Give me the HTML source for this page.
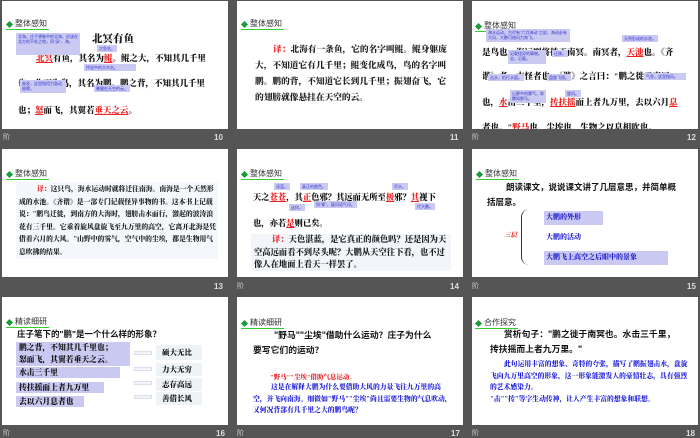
<!DOCTYPE html>
<html><head><meta charset="utf-8"><style>
*{margin:0;padding:0;box-sizing:border-box}
body{width:700px;height:438px;background:#555;position:relative;overflow:hidden;font-family:"Liberation Serif","Noto Serif CJK SC",serif}
.s{position:absolute;width:226px;height:128px;background:#fff;overflow:hidden}
.h{position:absolute;left:4px;top:18px;font:8px "Liberation Sans","Noto Sans CJK SC",sans-serif;color:#333;padding-left:9px;border-bottom:1px solid #3c3;line-height:10px;padding-right:2px}
.h:before{content:"";position:absolute;left:1px;top:3px;width:5px;height:5px;background:#1a9c3a;transform:rotate(45deg)}
.a{position:absolute;font-weight:900;color:#111;white-space:nowrap}
.n{position:absolute;background:#c9c9f2;color:#33c;font:4px "Liberation Sans","Noto Sans CJK SC",sans-serif;line-height:5px;padding:1px 2px}
.r{color:#e22;text-decoration:underline}
.f{position:absolute;color:#ddd;font:bold 8px "Liberation Sans",sans-serif}
.k{position:absolute;font:7px "Liberation Sans","Noto Sans CJK SC",sans-serif;color:#ccc}
.t{position:absolute;font-weight:900;color:#222}
.q{font-family:"Liberation Sans","Noto Sans CJK SC",sans-serif!important;font-weight:bold}
.bl{color:#22d}
</style></head><body>

<!-- slide 10 -->
<div class="s" style="left:2px;top:1px">
<div class="h">整体感知</div>
<div class="a" style="left:90px;top:30px;font-size:10.5px">北冥有鱼</div>
<div class="a" style="left:34px;top:51px;font-size:8.5px"><span class="r">北冥</span>有鱼，其名为<span class="r">鲲</span>。鲲之大，不知其几千里</div>
<div class="a" style="left:16px;top:76px;font-size:8.5px">也；化而为鸟，其名为鹏。鹏之背，不知其几千里</div>
<div class="a" style="left:16px;top:103px;font-size:8.5px">也；<span class="r">怒</span>而飞，其翼若<span class="r">垂天之云</span>。</div>
<div class="n" style="left:14px;top:32px;width:64px;height:22px">北海。庄子想象中的北海，应该在北方的不毛之地。同"溟"，海。</div>
<div class="n" style="left:95px;top:44px">大鱼名。</div>
<div class="n" style="left:82px;top:63px;width:52px">传说中的大鸟名。</div>
<div class="n" style="left:18px;top:79px;width:46px;height:13px">奋发，这里指用力鼓动翅膀。</div>
<div class="n" style="left:92px;top:84px">暴健在天空的云。</div>
</div>
<div class="k" style="left:3px;top:132px">阶</div><div class="f" style="left:214px;top:133px">10</div>

<!-- slide 11 -->
<div class="s" style="left:237px;top:1px">
<div class="h">整体感知</div>
<div class="t" style="left:18px;top:40px;width:196px;font-size:8.7px;line-height:16px;text-indent:18px"><span style="color:#e22">译：</span>北海有一条鱼，它的名字叫鲲。鲲身躯庞大，不知道它有几千里；鲲变化成鸟，鸟的名字叫鹏。鹏的背，不知道它长到几千里；振翅奋飞，它的翅膀就像悬挂在天空的云。</div>
</div>
<div class="f" style="left:450px;top:133px">11</div>

<!-- slide 12 -->
<div class="s" style="left:472px;top:1px">
<div class="h" style="left:3px;top:20px">整体感知</div>
<div class="a" style="left:10px;top:45px;font-size:8.5px">是鸟也，海运则将徙于南冥。南冥者，<span class="r">天池</span>也。《齐</div>
<div class="a" style="left:10px;top:69px;font-size:8.5px">谐》者，志怪者也。《谐》之言曰："鹏之徙于南冥</div>
<div class="a" style="left:10px;top:95px;font-size:8.5px">也，<span class="r">水</span>击三千里，<span class="r">抟扶摇</span>而上者九万里，去以六月<span class="r">息</span></div>
<div class="a" style="left:10px;top:120px;font-size:8.5px">者也。"<span class="r">野马</span>也，尘埃也，生物之以息相吹也。</div>
<div class="n" style="left:14px;top:28px;width:84px;height:13px">海水运动。古代有"六月海动"之说，海动必有大风，大鹏可借风力南飞。</div>
<div class="n" style="left:150px;top:34px">天然形成的水池。</div>
<div class="n" style="left:36px;top:49px;width:38px;height:14px">记载怪异的事物。志，记载。</div>
<div class="n" style="left:80px;top:49px">迁移。</div>
<div class="n" style="left:16px;top:73px">击水，拍打水面。</div>
<div class="n" style="left:75px;top:73px">盘旋飞翔。</div>
<div class="n" style="left:172px;top:72px;width:42px">气息，这里指风。</div>
<div class="n" style="left:38px;top:89px;width:36px;height:13px">山野中的雾气，奔腾如野马。</div>
<div class="n" style="left:93px;top:89px">旋风。</div>
</div>
<div class="k" style="left:472px;top:132px">阶</div><div class="f" style="left:687px;top:133px">12</div>

<!-- slide 13 -->
<div class="s" style="left:2px;top:149px">
<div class="h" style="top:20px">整体感知</div>
<div style="position:absolute;left:14px;top:33px;width:202px;height:77px;background:#f4f7fb"></div>
<div class="t" style="left:17px;top:35px;width:200px;font-size:6.8px;line-height:12.5px;text-indent:18px"><span style="color:#e22">译：</span>这只鸟，海水运动时就将迁往南海。南海是一个天然形成的水池。《齐谐》是一部专门记载怪异事物的书。这本书上记载说："鹏鸟迁徙，到南方的大海时，翅膀击水而行，激起的波涛浪花有三千里。它乘着旋风盘旋飞至九万里的高空，它离开北海是凭借着六月的大风。"山野中的雾气，空气中的尘埃，都是生物用气息吹拂的结果。</div>
</div>
<div class="f" style="left:214px;top:282px">13</div>

<!-- slide 14 -->
<div class="s" style="left:237px;top:149px">
<div class="h" style="top:20px">整体感知</div>
<div class="a" style="left:16px;top:42px;font-size:8.3px">天之<span class="r">苍苍</span>，其<span class="r">正</span>色邪？其远而无所至<span class="r">极</span>邪？<span class="r">其</span>视下</div>
<div class="a" style="left:16px;top:68px;font-size:8.3px">也，亦若<span class="r">是</span>则已矣。</div>
<div class="n" style="left:37px;top:34px">深蓝。</div>
<div class="n" style="left:63px;top:34px">真正的颜色。</div>
<div class="n" style="left:155px;top:34px">尽头。</div>
<div class="n" style="left:52px;top:55px">这样。</div>
<div class="n" style="left:77px;top:52px">同"耶"，疑问语气词。</div>
<div class="n" style="left:178px;top:54px">代大鹏。</div>
<div style="position:absolute;left:14px;top:85px;width:200px;height:37px;background:#f2f6fa"></div>
<div class="t" style="left:17px;top:85px;width:198px;font-size:8.3px;line-height:12.5px;text-indent:18px"><span style="color:#e22">译：</span>天色湛蓝，是它真正的颜色吗？还是因为天空高远而看不到尽头呢？大鹏从天空往下看，也不过像人在地面上看天一样罢了。</div>
</div>
<div class="k" style="left:237px;top:281px">阶</div><div class="f" style="left:450px;top:282px">14</div>

<!-- slide 15 -->
<div class="s" style="left:472px;top:149px">
<div class="h" style="top:20px">整体感知</div>
<div class="a q" style="left:34px;top:32px;font-size:8.5px">朗读课文，说说课文讲了几层意思，并简单概</div>
<div class="a q" style="left:15px;top:47px;font-size:8.5px">括层意。</div>
<div class="a" style="left:32px;top:81px;font-size:6.5px;color:#e22;font-style:italic">三层</div>
<div style="position:absolute;left:49px;top:60px;width:10px;height:56px;border-left:1px solid #333;border-radius:8px 0 0 8px"></div>
<div style="position:absolute;left:72px;top:62px;width:59px;height:14px;background:#c9c9f2"></div>
<div class="a" style="left:74px;top:63px;font-size:7px;color:#22c">大鹏的外形</div>
<div class="a" style="left:74px;top:83px;font-size:7px;color:#22c">大鹏的活动</div>
<div style="position:absolute;left:72px;top:102px;width:124px;height:14px;background:#c9c9f2"></div>
<div class="a" style="left:74px;top:103px;font-size:7px;color:#22c">大鹏飞上高空之后眼中的景象</div>
</div>
<div class="k" style="left:472px;top:281px">阶</div><div class="f" style="left:687px;top:282px">15</div>

<!-- slide 16 -->
<div class="s" style="left:2px;top:297px">
<div class="h" style="top:20px">精读细研</div>
<div class="a q" style="left:15px;top:31px;font-size:8.5px">庄子笔下的"鹏"是一个什么样的形象？</div>
<div style="position:absolute;left:14px;top:45px;width:114px;height:24px;background:#c9c9f2"></div>
<div style="position:absolute;left:14px;top:70px;width:104px;height:11px;background:#c9c9f2"></div>
<div style="position:absolute;left:14px;top:85px;width:88px;height:11px;background:#c9c9f2"></div>
<div style="position:absolute;left:14px;top:99px;width:68px;height:11px;background:#c9c9f2"></div>
<div class="a" style="left:17px;top:45px;font-size:7.8px;line-height:11.5px">鹏之背，不知其几千里也；<br>怒而飞，其翼若垂天之云。</div>
<div class="a" style="left:17px;top:70px;font-size:7.8px">水击三千里</div>
<div class="a" style="left:17px;top:85px;font-size:7.8px">抟扶摇而上者九万里</div>
<div class="a" style="left:17px;top:99px;font-size:7.8px">去以六月息者也</div>
<div style="position:absolute;left:132px;top:54px;width:18px;height:4px;border:1px solid #dde;background:#f4f4f8"></div>
<div style="position:absolute;left:132px;top:70px;width:18px;height:4px;border:1px solid #dde;background:#f4f4f8"></div>
<div style="position:absolute;left:132px;top:84px;width:18px;height:4px;border:1px solid #dde;background:#f4f4f8"></div>
<div style="position:absolute;left:132px;top:98px;width:18px;height:4px;border:1px solid #dde;background:#f4f4f8"></div>
<div style="position:absolute;left:154px;top:48px;width:46px;height:15px;background:#eef3f5"></div>
<div style="position:absolute;left:154px;top:66px;width:46px;height:13px;background:#eef3f5"></div>
<div style="position:absolute;left:154px;top:81px;width:46px;height:13px;background:#eef3f5"></div>
<div style="position:absolute;left:154px;top:95px;width:46px;height:13px;background:#eef3f5"></div>
<div class="a" style="left:160px;top:50px;font-size:7.5px">硕大无比</div>
<div class="a" style="left:160px;top:67px;font-size:7.5px">力大无穷</div>
<div class="a" style="left:160px;top:82px;font-size:7.5px">志存高远</div>
<div class="a" style="left:160px;top:96px;font-size:7.5px">善借长风</div>
</div>
<div class="k" style="left:3px;top:428px">阶</div><div class="f" style="left:216px;top:429px">16</div>

<!-- slide 17 -->
<div class="s" style="left:237px;top:297px">
<div class="h" style="top:21px">精读细研</div>
<div class="a q" style="left:37px;top:31px;font-size:8.8px">"野马""尘埃"借助什么运动？庄子为什么</div>
<div class="a q" style="left:16px;top:46px;font-size:8.8px">要写它们的运动？</div>
<div class="a" style="left:33px;top:75px;font-size:6.5px;color:#e22">"野马""尘埃"借助气息运动。</div>
<div class="t bl" style="left:16px;top:85px;width:200px;font-size:6.8px;line-height:11.5px;text-indent:18px">这是在解释大鹏为什么要借助大风的力量飞往九万里的高空，并飞向南海。细微如"野马""尘埃"尚且需要生物的气息吹动，又何况背部有几千里之大的鹏鸟呢？</div>
</div>
<div class="k" style="left:237px;top:428px">阶</div><div class="f" style="left:451px;top:429px">17</div>

<!-- slide 18 -->
<div class="s" style="left:472px;top:297px">
<div class="h" style="left:3px;top:21px">合作探究</div>
<div class="a q" style="left:32px;top:30px;font-size:8.8px">赏析句子："鹏之徙于南冥也。水击三千里，</div>
<div class="a q" style="left:18px;top:45px;font-size:8.8px">抟扶摇而上者九万里。"</div>
<div class="t bl" style="left:18px;top:62px;width:198px;font-size:6.8px;line-height:11.5px;text-indent:14px">此句运用丰富的想象、奇特的夸张，描写了鹏振翅击水，盘旋飞向九万里高空的形象，这一形象能激发人的豪情壮志，具有强烈的艺术感染力。<br>"击""抟"等字生动传神，让人产生丰富的想象和联想。</div>
</div>
<div class="k" style="left:472px;top:428px">阶</div><div class="f" style="left:686px;top:429px">18</div>

</body></html>
